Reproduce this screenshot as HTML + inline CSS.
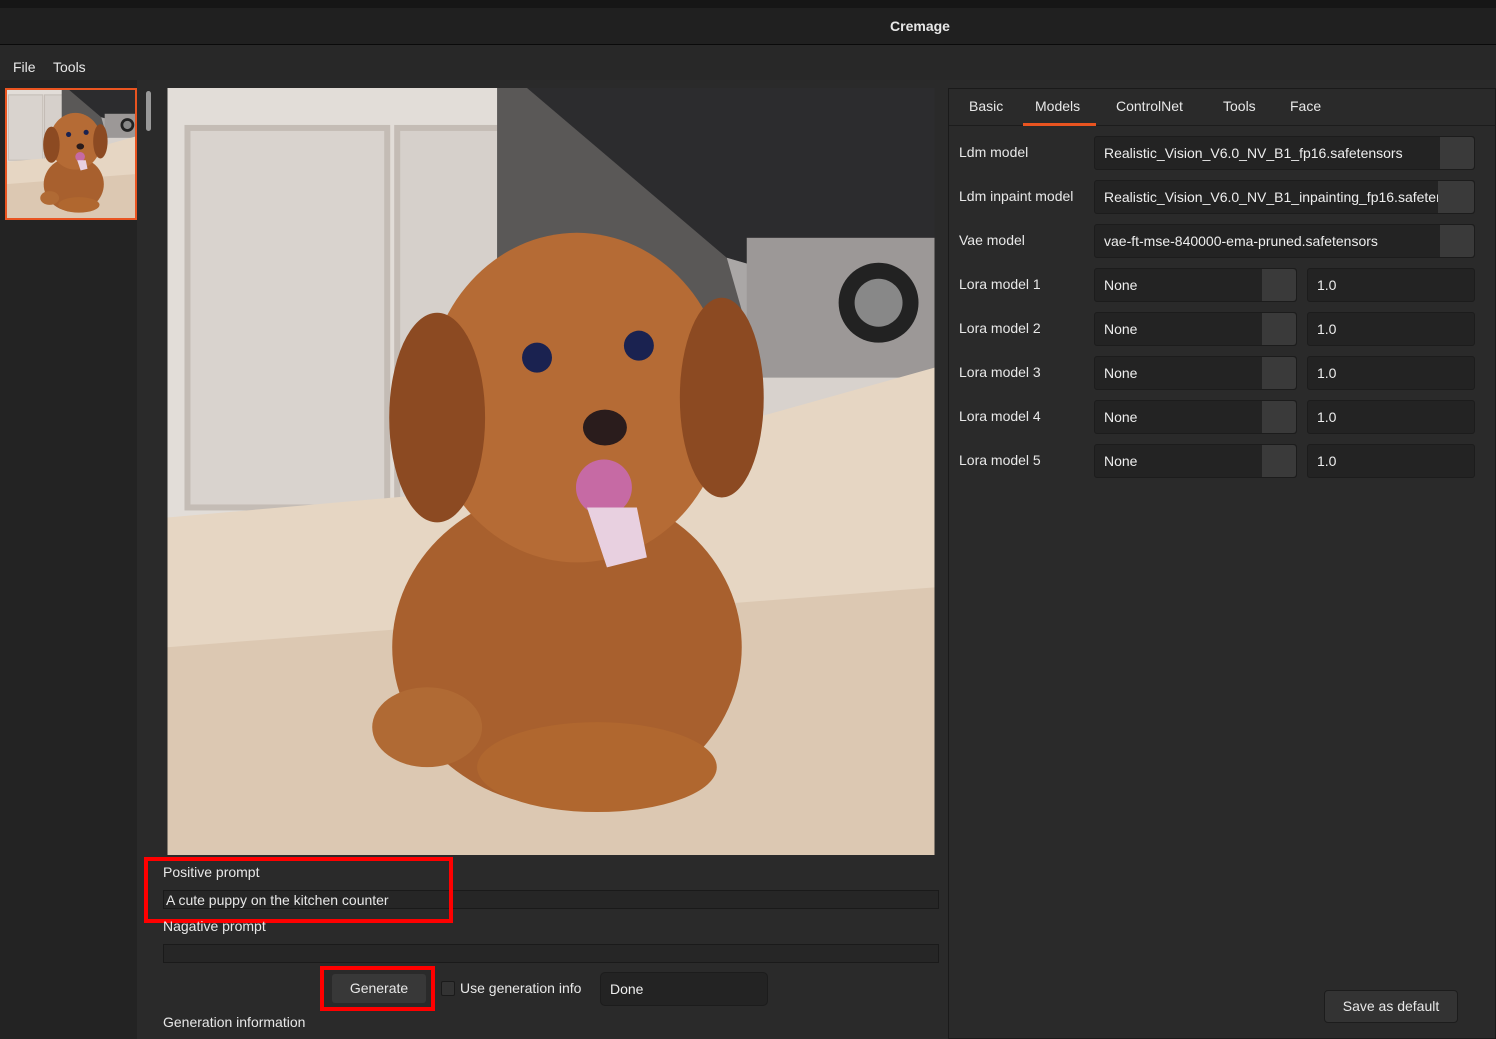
<!DOCTYPE html>
<html><head><style>
*{margin:0;padding:0;box-sizing:border-box}
body{width:1496px;height:1039px;background:#2a2a2a;font-family:"Liberation Sans",sans-serif;color:#e8e8e8;font-size:14px;position:relative;overflow:hidden}
.a{position:absolute}
.field{position:absolute;background:#232323;border:1px solid #1c1c1c;border-radius:3px;padding-left:9px;line-height:32px;font-size:14px;color:#eee}
.btn{position:absolute;background:#3a3a3a;border-radius:0 3px 3px 0}
.lbl{position:absolute;left:959px;font-size:14px}
</style></head><body>
<div class="a" style="left:0;top:0;width:1496px;height:8px;background:#161616"></div>
<div class="a" style="left:0;top:8px;width:1496px;height:36px;background:#202020"></div>
<div class="a" style="left:820px;top:8px;width:200px;text-align:center;line-height:36px;font-weight:bold;font-size:14px">Cremage</div>
<div class="a" style="left:0;top:44px;width:1496px;height:1px;background:#0a0a0a"></div>
<div class="a" style="left:0;top:45px;width:1496px;height:35px;background:#282828"></div>
<div class="a" style="left:13px;top:59px">File</div>
<div class="a" style="left:53px;top:59px">Tools</div>
<div class="a" style="left:0;top:80px;width:137px;height:959px;background:#232323"></div>
<div class="a" style="left:146px;top:91px;width:5px;height:40px;background:#999;border-radius:3px"></div>

<svg class="a" style="left:5px;top:88px" width="132" height="132" viewBox="0 0 768 768" preserveAspectRatio="none">
<use href="#img"/></svg>
<div class="a" style="left:5px;top:88px;width:132px;height:132px;border:2px solid #e95420"></div>

<svg class="a" style="left:167px;top:88px" width="768" height="767" viewBox="0 0 768 768">
<defs>
<g id="img">
<rect width="768" height="768" fill="#d8d2cd"/>
<rect x="0" y="0" width="340" height="430" fill="#e2ddd8"/>
<rect x="20" y="40" width="200" height="380" fill="#d9d3ce" stroke="#c4bcb5" stroke-width="6"/>
<rect x="230" y="40" width="110" height="380" fill="#d6d0cb" stroke="#c4bcb5" stroke-width="6"/>
<rect x="330" y="0" width="438" height="280" fill="#5a5857"/>
<polygon points="360,0 768,0 768,230 560,170" fill="#2c2c2e"/>
<polygon points="560,170 768,230 768,290 580,240" fill="#aaa7a6"/>
<rect x="580" y="150" width="188" height="140" fill="#9c9897"/>
<circle cx="712" cy="215" r="40" fill="#222"/><circle cx="712" cy="215" r="24" fill="#888"/>
<polygon points="0,430 340,400 768,280 768,768 0,768" fill="#e6d6c3"/>
<polygon points="0,560 768,500 768,768 0,768" fill="#dcc8b2"/>
<ellipse cx="400" cy="560" rx="175" ry="160" fill="#a8602e"/>
<ellipse cx="410" cy="310" rx="150" ry="165" fill="#b56b35"/>
<ellipse cx="270" cy="330" rx="48" ry="105" fill="#8c4a22"/>
<ellipse cx="555" cy="310" rx="42" ry="100" fill="#8c4a22"/>
<ellipse cx="430" cy="680" rx="120" ry="45" fill="#b0672f"/>
<ellipse cx="260" cy="640" rx="55" ry="40" fill="#b06a34"/>
<circle cx="370" cy="270" r="15" fill="#1a2250"/><circle cx="472" cy="258" r="15" fill="#1a2250"/>
<ellipse cx="438" cy="340" rx="22" ry="18" fill="#2a1c1c"/>
<ellipse cx="437" cy="400" rx="28" ry="28" fill="#c66aa4"/>
<polygon points="420,420 470,420 480,470 440,480" fill="#e8d0e0"/>
</g></defs>
<use href="#img"/>
</svg>

<div class="a" style="left:163px;top:864px;font-size:14px">Positive prompt</div>
<div class="a" style="left:163px;top:890px;width:776px;height:19px;background:#262626;border:1px solid #1a1a1a;padding-left:2px;line-height:18px">A cute puppy on the kitchen counter</div>
<div class="a" style="left:144px;top:857px;width:309px;height:66px;border:4px solid #ff0000"></div>
<div class="a" style="left:163px;top:918px">Nagative prompt</div>
<div class="a" style="left:163px;top:944px;width:776px;height:19px;background:#262626;border:1px solid #1a1a1a"></div>
<div class="a" style="left:320px;top:966px;width:115px;height:45px;border:4px solid #ff0000"></div>
<div class="a" style="left:332px;top:974px;width:94px;height:29px;background:#383838;border-radius:3px;text-align:center;line-height:29px">Generate</div>
<div class="a" style="left:441px;top:981px;width:14px;height:15px;background:#333;border:1px solid #1a1a1a;border-radius:2px"></div>
<div class="a" style="left:460px;top:980px">Use generation info</div>
<div class="field" style="left:600px;top:972px;width:168px;height:34px;line-height:32px;border-radius:5px">Done</div>
<div class="a" style="left:163px;top:1014px">Generation information</div>

<div class="a" style="left:948px;top:88px;width:548px;height:951px;border:1px solid #1a1a1a;background:#2a2a2a"></div>
<div class="a" style="left:949px;top:125px;width:547px;height:1px;background:#1c1c1c"></div>
<div class="a" style="left:969px;top:98px">Basic</div>
<div class="a" style="left:1035px;top:98px">Models</div>
<div class="a" style="left:1023px;top:123px;width:73px;height:3px;background:#e95420"></div>
<div class="a" style="left:1116px;top:98px">ControlNet</div>
<div class="a" style="left:1223px;top:98px">Tools</div>
<div class="a" style="left:1290px;top:98px">Face</div>

<div class="lbl" style="top:144px">Ldm model</div>
<div class="field" style="left:1094px;top:136px;width:381px;height:34px">Realistic_Vision_V6.0_NV_B1_fp16.safetensors</div>
<div class="btn" style="left:1440px;top:137px;width:34px;height:32px"></div>
<div class="lbl" style="top:188px">Ldm inpaint model</div>
<div class="field" style="left:1094px;top:180px;width:381px;height:34px;overflow:hidden;white-space:nowrap">Realistic_Vision_V6.0_NV_B1_inpainting_fp16.safetensors</div>
<div class="btn" style="left:1438px;top:181px;width:36px;height:32px"></div>
<div class="lbl" style="top:232px">Vae model</div>
<div class="field" style="left:1094px;top:224px;width:381px;height:34px">vae-ft-mse-840000-ema-pruned.safetensors</div>
<div class="btn" style="left:1440px;top:225px;width:34px;height:32px"></div>

<div class="lbl" style="top:276px">Lora model 1</div>
<div class="field" style="left:1094px;top:268px;width:203px;height:34px">None</div><div class="btn" style="left:1262px;top:269px;width:34px;height:32px"></div>
<div class="field" style="left:1307px;top:268px;width:168px;height:34px">1.0</div>
<div class="lbl" style="top:320px">Lora model 2</div>
<div class="field" style="left:1094px;top:312px;width:203px;height:34px">None</div><div class="btn" style="left:1262px;top:313px;width:34px;height:32px"></div>
<div class="field" style="left:1307px;top:312px;width:168px;height:34px">1.0</div>
<div class="lbl" style="top:364px">Lora model 3</div>
<div class="field" style="left:1094px;top:356px;width:203px;height:34px">None</div><div class="btn" style="left:1262px;top:357px;width:34px;height:32px"></div>
<div class="field" style="left:1307px;top:356px;width:168px;height:34px">1.0</div>
<div class="lbl" style="top:408px">Lora model 4</div>
<div class="field" style="left:1094px;top:400px;width:203px;height:34px">None</div><div class="btn" style="left:1262px;top:401px;width:34px;height:32px"></div>
<div class="field" style="left:1307px;top:400px;width:168px;height:34px">1.0</div>
<div class="lbl" style="top:452px">Lora model 5</div>
<div class="field" style="left:1094px;top:444px;width:203px;height:34px">None</div><div class="btn" style="left:1262px;top:445px;width:34px;height:32px"></div>
<div class="field" style="left:1307px;top:444px;width:168px;height:34px">1.0</div>

<div class="a" style="left:1324px;top:990px;width:134px;height:33px;background:#333;border:1px solid #1c1c1c;border-radius:4px;text-align:center;line-height:31px">Save as default</div>
</body></html>
